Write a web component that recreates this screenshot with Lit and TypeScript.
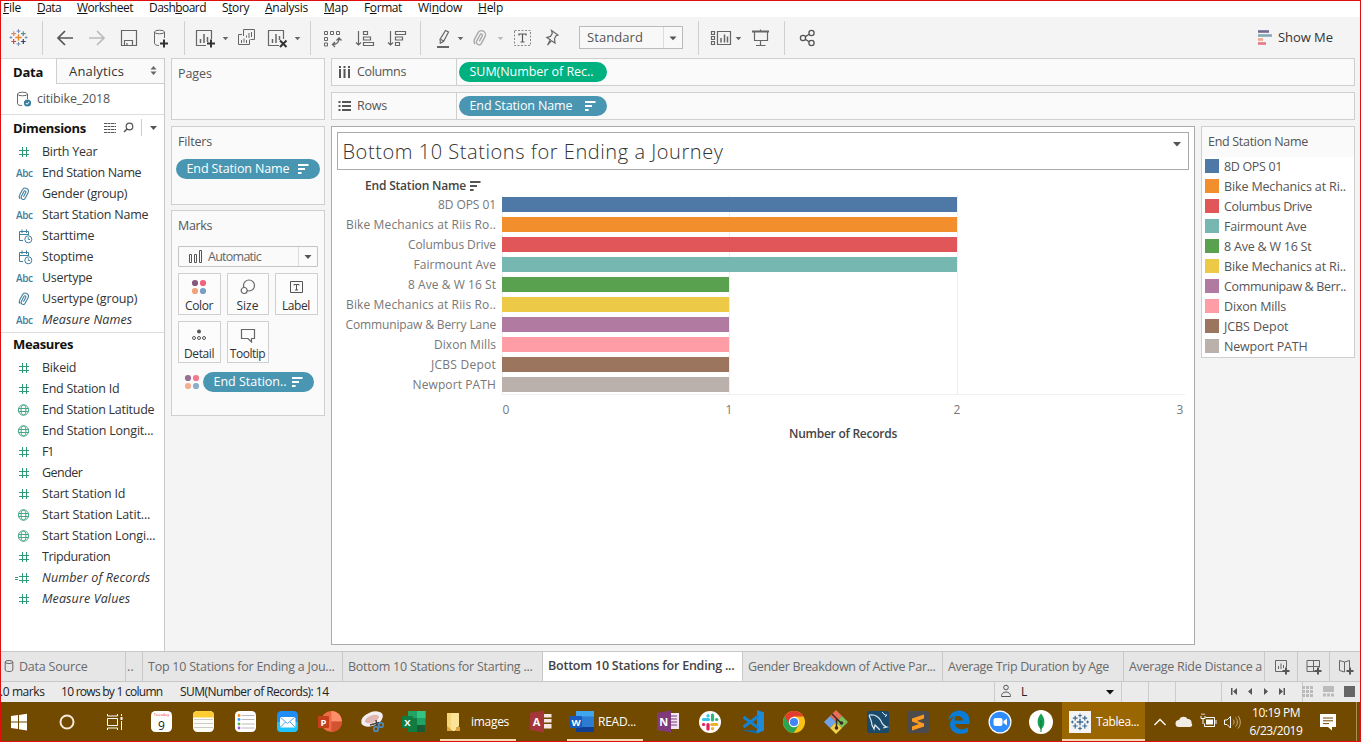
import { LitElement, html, svg, css, TemplateResult } from "lit";
import { customElement, property } from "lit/decorators.js";

/** Text tracked so that it fills a given width. */
@customElement("fit-text")
class FitText extends LitElement {
  @property() text = "";
  @property({ type: Number }) w = 0;
  static styles = css`
    :host { display: inline-block; white-space: pre; flex: none; }
  `;
  render() {
    return html`<span>${this.text}</span>`;
  }
  updated() {
    const s = this.renderRoot.querySelector("span") as HTMLElement;
    s.style.letterSpacing = "0px";
    const natural = s.getBoundingClientRect().width;
    if (this.w && this.text.length) s.style.letterSpacing = (this.w - natural) / this.text.length + "px";
  }
}

const t = (text: string, w: number, cls = "") => html`<fit-text class=${cls} .text=${text} .w=${w}></fit-text>`;

/** A slice of a strip: the viewBox keeps window coordinates. */
const seg = (x: number, y: number, w: number, h: number, body: unknown) =>
  html`<svg class="seg" width=${w} height=${h} viewBox="${x} ${y} ${w} ${h}" fill="none">${body}</svg>`;

const caret = (x: number, y: number, c = "#666") => svg`<path d="M${x - 2.8} ${y - 1.6}h5.6l-2.8 3.4z" fill=${c}/>`;
const vline = (x: number) => svg`<path d="M${x}.5 21V55" stroke="#d0d0d0"/>`;
const G = "#666";

const cross = (x: number, y: number, r: number, c: string, w = 1) =>
  svg`<path d="M${x - r} ${y}h${2 * r}M${x} ${y - r}v${2 * r}" stroke=${c} stroke-width=${w}/>`;
const tableauMark = (x: number, y: number, k: string[]) => svg`
  ${cross(x, y, 3.2, k[0], 1.4)}${cross(x, y - 6.4, 1.9, k[1])}${cross(x, y + 6.4, 1.9, k[1])}
  ${cross(x - 4.8, y - 3.8, 2.4, k[2], 1.2)}${cross(x + 4.8, y - 3.8, 2.4, k[3], 1.2)}
  ${cross(x - 4.8, y + 4, 2.4, k[4], 1.2)}${cross(x + 4.8, y + 4, 2.4, k[5], 1.2)}
  ${cross(x - 7.6, y, 1.4, k[6])}${cross(x + 7.6, y, 1.4, k[6])}`;

const clip = (x: number, y: number, c: string, k = 1) => svg`
  <g transform="translate(${x} ${y}) scale(${k}) rotate(28)" stroke=${c} stroke-width="1.1" fill="none">
    <path d="M-3.2 3V-2.5a3.2 3.2 0 0 1 6.4 0V3.6a2.1 2.1 0 0 1-4.2 0V-2a1 1 0 0 1 2 0V3M-3.2 2.5a4 4 0 0 0 2.2 4"/>
  </g>`;

const plus = (x: number, y: number, c = "#333", r = 4) =>
  svg`<path d="M${x - r} ${y}h${2 * r}M${x} ${y - r}v${2 * r}" stroke=${c} stroke-width="2"/>`;

const sortGlyph = (c: string) => html`<svg class="sortg" width="11" height="10" viewBox="0 0 11 10" fill=${c}>
  <path d="M0 0h10.5v2H0zM0 4h7v2H0zM0 8h3.6v2H0z"/></svg>`;

const fourDots = (k: number) => html`<svg width="16" height="16" viewBox="0 0 16 16">
  <g opacity=${k}><circle cx="4" cy="4" r="3.1" fill="#84587f"/><circle cx="12" cy="4" r="3.1" fill="#f0637c"/>
  <circle cx="4" cy="12" r="3.1" fill="#f2a27c"/><circle cx="12" cy="12" r="3.1" fill="#7a9fc4"/></g></svg>`;

const fieldIcon = (kind: string): TemplateResult => {
  const green = "#2f9a78";
  const blue = "#3f7f9f";
  if (kind === "abc") return html`<b class="abc">Abc</b>`;
  if (kind === "clip") return html`<svg width="20" height="18" viewBox="0 0 20 18">${clip(10, 8.6, blue, 1)}</svg>`;
  if (kind === "date")
    return html`<svg width="20" height="18" viewBox="0 0 20 18" fill="none" stroke=${blue}>
      <path d="M9 13.5H5.5v-9h9V8M5.5 7.5h9M8 2.500v3.500M12.500 2.500v3.500"/><circle cx="14.300" cy="12.300" r="3.500"/><path d="M14.300 10.300v2.200h1.800" stroke-width=".9"/></svg>`;
  if (kind === "globe")
    return html`<svg width="20" height="18" viewBox="0 0 20 18" fill="none" stroke="#45a585">
      <circle cx="9.500" cy="9" r="5.200"/><ellipse cx="9.500" cy="9" rx="2.400" ry="5"/><path d="M5 7.500h9M5 10.500h9"/></svg>`;
  return html`<svg width="20" height="18" viewBox="0 0 20 18" fill="none" stroke=${green}>
    <path d="M8.500 4v10M12.500 4v10M5 7.500h10M5 11.500h10"/>${kind === "calc" ? svg`<path d="M1 8.500h3M1 10.500h3"/>` : ""}</svg>`;
};

type Field = [string, string, number];
const dimensions: Field[] = [
  ["num", "Birth Year", 56], ["abc", "End Station Name", 100], ["clip", "Gender (group)", 86],
  ["abc", "Start Station Name", 107], ["date", "Starttime", 53], ["date", "Stoptime", 52],
  ["abc", "Usertype", 51], ["clip", "Usertype (group)", 96], ["abc", "Measure Names", 91],
];
const measures: Field[] = [
  ["num", "Bikeid", 35], ["num", "End Station Id", 78], ["globe", "End Station Latitude", 113],
  ["globe", "End Station Longit...", 112], ["num", "F1", 12], ["num", "Gender", 41],
  ["num", "Start Station Id", 84], ["globe", "Start Station Latit...", 109], ["globe", "Start Station Longi...", 114],
  ["num", "Tripduration", 69], ["calc", "Number of Records", 109], ["num", "Measure Values", 89],
];
const italics = new Set(["Measure Names", "Number of Records", "Measure Values"]);

const stations: { label: string; w: number; v: number; c: string; legend: string; lw: number }[] = [
  { label: "8D OPS 01", w: 58, v: 2, c: "#4e79a7", legend: "8D OPS 01", lw: 58 },
  { label: "Bike Mechanics at Riis Ro..", w: 150, v: 2, c: "#f28e2b", legend: "Bike Mechanics at Ri..", lw: 122 },
  { label: "Columbus Drive", w: 88, v: 2, c: "#e15759", legend: "Columbus Drive", lw: 88 },
  { label: "Fairmount Ave", w: 82.5, v: 2, c: "#76b7b2", legend: "Fairmount Ave", lw: 82.5 },
  { label: "8 Ave & W 16 St", w: 88, v: 1, c: "#59a14f", legend: "8 Ave & W 16 St", lw: 87.5 },
  { label: "Bike Mechanics at Riis Ro..", w: 150, v: 1, c: "#edc948", legend: "Bike Mechanics at Ri..", lw: 122 },
  { label: "Communipaw & Berry Lane", w: 150.5, v: 1, c: "#b07aa1", legend: "Communipaw & Berr..", lw: 122 },
  { label: "Dixon Mills", w: 62, v: 1, c: "#ff9da7", legend: "Dixon Mills", lw: 62 },
  { label: "JCBS Depot", w: 65, v: 1, c: "#9c755f", legend: "JCBS Depot", lw: 64.5 },
  { label: "Newport PATH", w: 83.5, v: 1, c: "#bab0ac", legend: "Newport PATH", lw: 83.5 },
];

const menus: [string, string, string, number, number][] = [
  ["", "F", "ile", 18, 16], ["", "D", "ata", 24, 16], ["", "W", "orksheet", 56, 16], ["Dash", "b", "oard", 57, 16],
  ["S", "t", "ory", 27, 16], ["", "A", "nalysis", 43, 16], ["", "M", "ap", 24, 16], ["F", "o", "rmat", 38, 16],
  ["Wi", "n", "dow", 44, 16], ["", "H", "elp", 25, 0],
];

@customElement("app-root")
class AppRoot extends LitElement {
  static styles = css`
    :host {
      display: flex; flex-direction: column; position: relative; width: 1361px; height: 742px;
      overflow: hidden; background: #f4f4f4; color: #333;
      font: 12.5px/18px "Open Sans", "Noto Sans", sans-serif;
    }
    * { box-sizing: border-box; }
    svg { display: block; flex: none; }
    .frame { position: absolute; inset: 0; border: 1px solid #e01010; pointer-events: none; z-index: 5; }
    .menubar { height: 17px; background: #fff; display: flex; padding-left: 3px; color: #111; font-size: 12px; line-height: 15px; }
    .menu { white-space: pre; display: flex; }
    .menu u { text-underline-offset: 1px; }
    .toolbar { height: 41px; display: flex; flex: none; }
    .select { display: flex; align-items: center; width: 104px; height: 23px; margin-top: 9px; border: 1px solid #bbb; background: #f8f8f8; padding-left: 7px; font-size: 13px; color: #555; }
    .select fit-text { padding-bottom: 1px; }
    .select .arrow { margin-left: auto; border-left: 1px solid #ddd; height: 21px; }
    .showme { margin-left: auto; display: flex; align-items: center; padding-right: 28px; font-size: 13px; height: 40px; gap: 6px; }
    .main { display: flex; height: 593px; flex: none; }
    .side { width: 165px; background: #fff; border-right: 1px solid #c9c9c9; flex: none; }
    .panetabs { display: flex; height: 26px; }
    .panetab { width: 56px; padding: 4px 0 0 13px; font-weight: 700; font-size: 13px; color: #111; border-top: 1px solid #ddd; }
    .panetab2 { flex: 1; display: flex; justify-content: space-between; background: #fafafa; border: 1px solid #cfcfcf; border-right: 0; padding: 3px 5px 0 12px; font-size: 13px; }
    .source { display: flex; height: 31px; border-bottom: 1px solid #ddd; align-items: center; padding-left: 16px; gap: 5px; color: #555; }
    .head { display: flex; height: 26px; align-items: center; padding-left: 13px; font-weight: 700; font-size: 13px; color: #111; }
    .head.m { height: 25px; margin-top: 2px; border-top: 1px solid #ddd; padding-bottom: 2px; }
    .field { height: 21px; display: flex; align-items: center; padding-left: 14px; }
    .field .gi { width: 28px; display: flex; }
    .abc { color: #3f7f9f; font-size: 10px; letter-spacing: -.4px; padding-left: 2px; font-weight: 600; }
    .it { font-style: italic; }
    .cards { width: 154px; margin-left: 6px; display: flex; flex-direction: column; flex: none; color: #555; }
    .card { border: 1px solid #cfcfcf; background: #fafafa; padding: 6px; flex: none; }
    .pages { height: 62px; margin-bottom: 6px; }
    .filters { height: 79px; margin-bottom: 5px; padding-left: 4px; }
    .filters .lbl { padding-left: 2px; display: block; }
    .marks { height: 206px; }
    .lbl { display: block; }
    .pill { height: 20px; border-radius: 10px; background: #4996b2; color: #fff; display: flex; align-items: center; justify-content: space-between; }
    .filters .pill { width: 144px; margin-top: 8px; padding: 0 11px 1px 10.500px; }
    .pill.g { background: #00b180; }
    .shelf .pill { width: 148px; margin-left: 2px; padding: 0 11px 1px 10.500px; }
    .mtype { display: flex; width: 140px; height: 21px; margin-top: 11px; border: 1px solid #c4c4c4; border-radius: 1px; align-items: center; padding-left: 10px; gap: 5px; color: #666; }
    .mtype .arrow { margin-left: auto; border-left: 1px solid #ddd; }
    .mgrid { display: grid; grid-template-columns: 43px 42px 43px; gap: 6px; margin-top: 6px; }
    .mbtn { height: 42px; border: 1px solid #cfcfcf; background: #fcfcfc; display: flex; flex-direction: column; align-items: center; justify-content: space-between; font-size: 12px; line-height: 15px; padding: 5px 1px 1px 0; color: #333; }
    .mpill { display: flex; margin-top: 9px; padding-left: 6px; gap: 3px; align-items: center; }
    .mpill .pill { width: 111px; padding: 0 11px 1px 10.500px; }
    .work { margin-left: 6px; display: flex; flex-direction: column; flex: none; width: 1024px; }
    .shelf { height: 28px; flex: none; margin-bottom: 6px; border: 1px solid #cfcfcf; background: #fafafa; display: flex; align-items: center; color: #555; }
    .shelf .name { width: 125px; height: 26px; border-right: 1px solid #cfcfcf; display: flex; align-items: center; padding-left: 6px; gap: 6px; }
    .lower { display: flex; align-items: flex-start; }
    .viz { width: 864px; height: 519px; background: #fff; border: 1px solid #aaa; flex: none; padding: 5px; }
    .title { width: 852px; height: 38px; border: 1px solid #aaa; padding: 5px 6px 0 4.500px; display: flex; justify-content: space-between; font-size: 20px; line-height: 28px; font-weight: 300; color: #333; }
    .chead { display: flex; padding: 6px 0 0 28px; gap: 4px; align-items: center; font-weight: 600; font-size: 12px; height: 25px; color: #444; }
    .plot { display: flex; }
    .names { width: 160px; color: #777; font-size: 12px; }
    .nm { height: 20px; line-height: 20px; display: flex; justify-content: flex-end; padding-right: 1px; }
    .bars { width: 683px; margin-left: 5px; height: 200px; padding-top: 2px; border-bottom: 1px solid #f0f0f0; border-left: 1px solid #eee;
      background: linear-gradient(#eee, #eee) 226px 0/1px 100% no-repeat, linear-gradient(#eee, #eee) 454px 0/1px 100% no-repeat; }
    .bar { height: 15px; margin: 0 0 5px -1px; }
    .axis { display: grid; grid-template-columns: 223px 228px 223px 8px; padding: 6px 0 0 165px; color: #777; font-size: 12px; }
    .axis span { width: 8px; text-align: center; }
    .axt { display: flex; justify-content: center; padding: 6px 0 0 158px; width: 854px; font-size: 12px; font-weight: 600; color: #444; }
    .legend { width: 154px; height: 232px; margin-left: 6px; border: 1px solid #cfcfcf; background: #fff; }
    .lh { background: #fafafa; height: 30px; padding: 6px 0 0 6px; color: #555; }
    .li { display: flex; height: 20px; align-items: center; gap: 5px; padding-left: 3px; color: #555; }
    .li i { width: 14px; height: 14px; flex: none; margin-bottom: 2px; }
    .tabs { height: 31px; flex: none; display: flex; background: #e6e6e6; border-top: 1px solid #c8c8c8; border-bottom: 1px solid #c8c8c8; color: #6a6a6a; }
    .tab { border-right: 1px solid #c8c8c8; padding: 6px 0 0 5px; width: 200px; flex: none; overflow: hidden; white-space: pre; }
    .tab.ds { width: 126px; display: flex; gap: 5px; padding-left: 4px; }
    .tab.dots { width: 17px; padding-left: 1px; }
    .tab.act { background: #fff; color: #444; font-weight: 600; padding-top: 5px; }
    .tab.trip { width: 181px; }
    .tab.ride { width: 141px; }
    .status { height: 20px; flex: none; display: flex; background: #ebebeb; color: #222; font-size: 12px; line-height: 20px; }
    .status .a { width: 61px; }
    .status .b { width: 119px; }
    .status .c { width: 814px; }
    .task { height: 40px; flex: none; display: flex; background: #714a00; color: #fff; font-size: 12px; }
    .run { display: flex; align-items: center; height: 39px; border-bottom: 2px solid #f2d9ae; width: 76px; }
    .run fit-text { padding-top: 2px; }
    .run.tb { background: #9a6602; width: 83px; }
    .clock { width: 66px; display: flex; flex-direction: column; align-items: center; padding-top: 2px; line-height: 18px; }
  `;

  field([k, n, w]: Field) {
    return html`<div class="field"><span class="gi">${fieldIcon(k)}</span>${t(n, w - 0.7, italics.has(n) ? "it" : "")}</div>`;
  }

  menu([a, u, b]: [string, string, string, number, number]) {
    return html`<div class="menu">${a}<u>${u}</u>${b}</div>`;
  }

  firstUpdated() {
    // Each menu title takes its own width plus the gap to the next one.
    this.renderRoot.querySelectorAll<HTMLElement>(".menu").forEach((m, i) => {
      const w = menus[i][3];
      const n = (m.textContent || "").length;
      const natural = m.getBoundingClientRect().width;
      m.style.letterSpacing = (w - natural) / n + "px";
      m.style.marginRight = menus[i][4] + "px";
    });
  }

  toolbar() {
    return html`<div class="toolbar">
      ${seg(0, 17, 110, 41, svg`
        ${tableauMark(18.5, 37.5, ["#e8862e", "#6b8fb0", "#d98a6a", "#5d8f8a", "#c0504d", "#34406e", "#7a92b8"])}
        ${vline(42)}
        <path d="M73 38H58M65 31l-7 7 7 7" stroke="#555" stroke-width="1.700"/>
        <path d="M89 38h15M97 31l7 7-7 7" stroke="#bbb" stroke-width="1.700"/>`)}
      ${seg(110, 17, 76, 41, svg`
        <path d="M121.500 30.500h15v15h-15zM124.500 45v-4.500h8V45M127 43v2" stroke=${G} stroke-width="1.200"/>
        <ellipse cx="159.500" cy="32" rx="5" ry="1.800" stroke=${G}/>
        <path d="M154.500 32v11.500c0 1 2 2 4.500 2M164.500 32v6" stroke=${G}/>${plus(164, 43.500)}${vline(184)}`)}
      ${seg(186, 17, 126, 41, svg`
        <path d="M206 45.500h-9.500v-15h15V39" stroke=${G} stroke-width="1.200"/><path d="M200.500 39v4M204 34v9M207.500 37v5" stroke=${G} stroke-width="1.500"/>
        ${plus(211, 43.500)}${caret(225.500, 38.500)}
        <path d="M243.500 36v-6.500h11v10h-4" stroke=${G}/><path d="M246.500 35.500v2M249 33v5M251.500 32v5" stroke=${G}/>
        <path d="M242 34.500h-3.500v10h11v-5" stroke=${G}/><path d="M241.500 40v3M244 38.500v4M246.500 40v3" stroke=${G}/>
        <path d="M279 45.500h-10.500v-15h15V39" stroke=${G} stroke-width="1.200"/><path d="M272.500 39v4M276 34v9M279.500 36v4" stroke=${G} stroke-width="1.500"/>
        <path d="M280 40.500l6.500 6.500M286.500 40.500l-6.500 6.500" stroke="#333" stroke-width="2"/>${caret(297.500, 38.500)}${vline(310)}`)}
      ${seg(312, 17, 110, 41, svg`
        <g stroke=${G}><path d="M324.500 31.500h3v3h-3zM330.500 31.500h3v3h-3zM336.500 31.500h3v3h-3zM324.500 37.500h3v3h-3zM324.500 43h3v3h-3z"/>
        <path d="M339 38.500c0 4-2.500 6-6.500 6M336.500 40.500l2.500-2.500 2.500 2.500M335 42l-2.500 2.500 2.500 2.500" stroke-width="1.300"/></g>
        <g stroke=${G} stroke-width="1.200"><path d="M358.500 31v14M356 42.500l2.500 2.500 2.500-2.500M363.500 31.500h4v3h-4zM363.500 37h7v3h-7zM363.500 42.500h10v3h-10z"/>
        <path d="M390.500 31v14M388 42.500l2.500 2.500 2.500-2.500M395.500 31.500h10v3h-10zM395.500 37h7v3h-7zM395.500 42.500h4v3h-4z"/></g>${vline(420)}`)}
      ${seg(422, 17, 157, 41, svg`
        <path d="M437 47h12" stroke=${G} stroke-width="2"/><path d="M445.500 30.500l3 1.500-5 9.500-3 1.500-.5-3.500zM441 39.500l3 1.700M439.500 43l1.500-1" stroke=${G} stroke-width="1.200"/>
        ${caret(460.500, 38.500)}${clip(480, 37.500, "#aaa", 1.250)}${caret(500.500, 38.500, "#bbb")}
        <path d="M514.500 30.500h16v15h-16z" stroke="#888" stroke-dasharray="2 1.500"/>
        <path d="M519 35.500v-1.500h7v1.500M522.500 34v8M520.500 42h4" stroke="#555" stroke-width="1.200"/>
        <path d="M551.500 30.500l6.500 4.500-2 .8-1.500 3 .5 4.200-3.500-2.300-4 4.500 2.800-5.500-3.500-2.300 3.700-1 1.800-3z" stroke=${G} stroke-width="1.200"/>`)}
      <div class="select">${t("Standard", 56)}<span class="arrow">${seg(664, 27, 18, 21, svg`<path d="M669.500 36.500h7l-3.500 3.800z" fill="#555"/>`)}</span></div>
      ${seg(683, 17, 150, 41, svg`${vline(698)}
        <g stroke=${G}><path d="M711.500 31.500h3v3h-3zM711.500 36.500h3v3h-3zM711.500 41.500h3v3h-3zM717.500 31.500h13v13h-13z" stroke-width="1.200"/>
        <path d="M721 38v4.500M724.500 34.500v8M727.500 36.500v6" stroke-width="1.500"/></g>${caret(738.500, 38.500)}
        <path d="M752 31.500h17" stroke=${G} stroke-width="2"/><path d="M754.500 32v8.500h13V32M760.500 29.500v1.500M760.500 41v4.500M756 45.500h9.500" stroke=${G} stroke-width="1.200"/>
        ${vline(784)}<g stroke="#555" stroke-width="1.300"><circle cx="803" cy="38" r="2.600"/><circle cx="811.500" cy="33" r="2.600"/><circle cx="811.500" cy="43" r="2.600"/>
        <path d="M805.300 36.600l4-2.300M805.300 39.400l4 2.300"/></g>`)}
      <div class="showme">${seg(1257, 29, 15, 17, svg`
        <path d="M1258 31.500h11" stroke="#75698f" stroke-width="2.600"/><path d="M1258 35.500h14" stroke="#86a8b8" stroke-width="2.600"/>
        <path d="M1258 39.500h5" stroke="#f0a590" stroke-width="2.600"/><path d="M1258 43.500h8" stroke="#e57886" stroke-width="2.600"/>`)}${t("Show Me", 55)}</div>
    </div>`;
  }

  side() {
    return html`<div class="side">
      <div class="panetabs"><div class="panetab">${t("Data", 30)}</div>
        <div class="panetab2">${t("Analytics", 55)}<svg width="11" height="16" viewBox="0 0 11 16"><path d="M2.500 7.500l3-3.500 3 3.500zM2.500 9.500h6l-3 3.500z" fill="#666"/></svg></div></div>
      <div class="source"><svg width="16" height="18" viewBox="0 0 16 18" fill="none"><ellipse cx="6.500" cy="4" rx="5" ry="1.800" stroke=${G}/>
        <path d="M1.500 4v9.500c0 1.500 2 2 4.500 2M11.500 4v5" stroke=${G}/><circle cx="11.500" cy="13" r="3.600" fill="#3a7f9d"/><path d="M9.800 13l1.300 1.300 2-2.400" stroke="#fff"/></svg>${t("citibike_2018", 73)}</div>
      <div class="head">${t("Dimensions", 73)}${seg(86, 115, 78, 26, svg`
        <path d="M104 124.500h12M104 127.500h12M104 130.500h12M104 133.500h12" transform="translate(0 -1)" stroke="#555" stroke-dasharray="3 .5"/>
        <circle cx="129.500" cy="126.500" r="3.300" stroke="#555" stroke-width="1.200"/><path d="M127 129l-3 3" stroke="#555" stroke-width="1.600"/>
        <path d="M141.500 119v17" stroke="#ccc"/><path d="M150 126h7l-3.500 4z" fill="#555"/>`)}</div>
      ${dimensions.map((f) => this.field(f))}
      <div class="head m">${t("Measures", 60)}</div>
      ${measures.map((f) => this.field(f))}
    </div>`;
  }

  cards() {
    const btn = (name: string, w: number, icon: unknown) => html`<div class="mbtn">${icon}${t(name, w)}</div>`;
    return html`<div class="cards">
      <div class="card pages">${t("Pages", 34)}</div>
      <div class="card filters"><span class="lbl">${t("Filters", 34)}</span>
        <div class="pill">${t("End Station Name", 103)}${sortGlyph("#fff")}</div></div>
      <div class="card marks"><span class="lbl">${t("Marks", 34)}</span>
        <div class="mtype"><svg width="14" height="13" viewBox="0 0 14 13" fill="none" stroke="#555"><path d="M.5 4.500h2v8h-2zM5.500 4.500h2v8h-2zM10.500 .5h2v12h-2z"/></svg>${t("Automatic", 53)}
          <span class="arrow">${seg(299, 247, 18, 19, svg`<path d="M304.500 255h7l-3.500 4z" fill="#555"/>`)}</span></div>
        <div class="mgrid">
          ${btn("Color", 28, fourDots(1))}
          ${btn("Size", 22, html`<svg width="16" height="16" viewBox="0 0 16 16" fill="none" stroke=${G}><circle cx="9" cy="6.500" r="5.500" stroke-width="1.200"/><circle cx="4.200" cy="11.500" r="3" fill="#fff" stroke-width="1.200"/></svg>`)}
          ${btn("Label", 28, html`<svg width="16" height="16" viewBox="0 0 16 16" fill="none" stroke="#555"><path d="M2.500 2.500h12v11h-12z"/><path d="M6 6.500V5.500h5v1M8.500 5.500v5.500M7 11h3"/></svg>`)}
          ${btn("Detail", 30, html`<svg width="16" height="16" viewBox="0 0 16 16" fill="none" stroke="#555"><circle cx="8" cy="4.500" r="2" fill="#555" stroke="none"/><circle cx="3" cy="11" r="1.500"/><circle cx="8" cy="11" r="1.500"/><circle cx="13" cy="11" r="1.500"/></svg>`)}
          ${btn("Tooltip", 35.5, html`<svg width="16" height="16" viewBox="0 0 16 16" fill="none" stroke=${G}><path d="M1.500 2.500h13v9h-3v3.500l-3.500-3.500H1.500z" stroke-width="1.200"/></svg>`)}
        </div>
        <div class="mpill">${fourDots(0.85)}<div class="pill">${t("End Station..", 73)}${sortGlyph("#fff")}</div></div>
      </div>
    </div>`;
  }

  work() {
    return html`<div class="work">
      <div class="shelf"><span class="name"><svg width="13" height="13" viewBox="0 0 13 13" fill="#555"><path d="M1 3h2v9H1zM5.500 3h2v9h-2zM10 3h2v9h-2zM1 0h2v2H1zM5.500 0h2v2h-2zM10 0h2v2h-2z"/></svg>${t("Columns", 49)}</span>
        <div class="pill g">${t("SUM(Number of Rec..", 124)}</div></div>
      <div class="shelf"><span class="name"><svg width="13" height="13" viewBox="0 0 13 13" fill="#555"><path d="M4 1h9v2H4zM4 5h9v2H4zM4 9h9v2H4zM.5 1h2v2h-2zM.5 5h2v2h-2zM.5 9h2v2h-2z"/></svg>${t("Rows", 30)}</span>
        <div class="pill">${t("End Station Name", 103)}${sortGlyph("#fff")}</div></div>
      <div class="lower">
        <div class="viz">
          <div class="title">${t("Bottom 10 Stations for Ending a Journey", 381)}
            <svg width="10" height="10" viewBox="0 0 10 10"><path d="M1 4h8L5 8.500z" fill="#555"/></svg></div>
          <div class="chead">${t("End Station Name", 101)}${sortGlyph("#555")}</div>
          <div class="plot">
            <div class="names">${stations.map((s) => html`<div class="nm">${t(s.label, s.w)}</div>`)}</div>
            <div class="bars">${stations.map((s) => html`<div class="bar" style="width:${Math.floor(s.v * 227.5)}px;background:${s.c}"></div>`)}</div>
          </div>
          <div class="axis">${[0, 1, 2, 3].map((n) => html`<span>${n}</span>`)}</div>
          <div class="axt">${t("Number of Records", 108)}</div>
        </div>
        <div class="legend"><div class="lh">${t("End Station Name", 100)}</div>
          ${stations.map((s) => html`<div class="li"><i style="background:${s.c}"></i>${t(s.legend, s.lw)}</div>`)}</div>
      </div>
    </div>`;
  }

  bottom() {
    return html`<div class="tabs">
        <div class="tab ds"><svg width="10" height="16" viewBox="0 0 10 16" fill="none" stroke=${G}><ellipse cx="5" cy="4" rx="3.800" ry="1.500"/><path d="M1.200 4v8c0 2 7.600 2 7.600 0V4"/></svg>${t("Data Source", 68.5)}</div>
        <div class="tab dots">${t("..", 7)}</div>
        <div class="tab">${t("Top 10 Stations for Ending a Jou...", 186.5)}</div>
        <div class="tab">${t("Bottom 10 Stations for Starting ...", 184.5)}</div>
        <div class="tab act">${t("Bottom 10 Stations for Ending ...", 186.5)}</div>
        <div class="tab">${t("Gender Breakdown of Active Par...", 187.5)}</div>
        <div class="tab trip">${t("Average Trip Duration by Age", 161)}</div>
        <div class="tab ride">${t("Average Ride Distance a", 133)}</div>
        ${seg(1264, 652, 97, 29, svg`<g stroke=${G}><path d="M1296.500 652v29M1328.500 652v29" stroke="#c8c8c8"/>
          <path d="M1282 671.500h-7.500v-11h11v7M1277.500 666v3M1280 663.500v5.500M1282.500 665v3"/>
          <path d="M1314 671.500h-8v-11h12.500v7M1306 666.500h12M1312.500 660.500v11"/>
          <path d="M1338.500 660.500l5 1.500 5-1.500v7M1338.500 660.500v10l5 1.500M1343.500 662v10"/></g>
          ${plus(1285, 671, "#555", 3.500)}${plus(1317, 671, "#555", 3.500)}${plus(1349, 671, "#555", 3.500)}`)}
      </div>
      <div class="status"><span class="a">${t(".0 marks", 44.5)}</span><span class="b">${t("10 rows by 1 column", 101.5)}</span><span class="c">${t("SUM(Number of Records): 14", 148.5)}</span>
        ${seg(994, 682, 27, 20, svg`<path d="M994.500 682v20" stroke="#ccc"/><circle cx="1006" cy="687.500" r="2.300" stroke="#555"/><path d="M1001.500 696.500c-.5-6 9.500-6 9 0z" stroke="#555"/>`)}
        ${t("L", 7)}
        ${seg(1028, 682, 333, 20, svg`<path d="M1106 690h8l-4 4.500z" fill="#111"/>
          <path d="M1121.500 682v20M1148.500 682v20M1175.500 682v20M1221.500 682v20M1302.500 682v20" stroke="#ccc"/>
          <g fill="#555"><path d="M1231 688h1.500v7h-1.500zM1237 688v7l-4-3.500zM1252 688v7l-4-3.500zM1264 688v7l4-3.500zM1279 688v7l4-3.500zM1283.500 688h1.500v7h-1.500z"/></g>
          <g fill="#bbb">${[0, 1, 2].map((r) => [0, 1, 2].map((c) => svg`<rect x=${1302 + c * 4} y=${686 + r * 4} width="3" height="3"/>`))}
          <path d="M1323 686h11v6h-11zM1323 693.500h3v3h-3zM1327 693.500h3v3h-3zM1331 693.500h3v3h-3z"/></g>
          <path d="M1344 686h11v11h-11z" fill="#666"/>`)}
      </div>`;
  }

  taskbar() {
    const card = (x: number, fill: string, body: unknown) => svg`<rect x=${x} y="711" width="21" height="21" rx="4.500" fill=${fill}/>${body}`;
    const letter = (x: number, l: string, c: string, w = 11) => svg`<rect x=${x} y="716" width=${w} height="12" rx="1" fill=${c}/>
      <text x=${x + w / 2} y="725.700" text-anchor="middle" font-size="9.500" font-weight="700" font-family="Open Sans" fill="#fff">${l}</text>`;
    return html`<div class="task">
      ${seg(0, 702, 146, 40, svg`<path d="M11 716l7-1v6.500h-7zM19 714.900l8-1.200v7.800h-8zM11 722.500h7v6.500l-7-1zM19 722.500h8v8l-8-1.200z" fill="#fff"/>
        <circle cx="67" cy="722" r="6.500" stroke="#f4ead8" stroke-width="2"/>
        <path d="M107.500 718.500h10v7h-10zM107.500 714v2h10v-2M107.500 730v-2h10v2M121.500 714v2M121.500 721v9" stroke="#fff"/><path d="M120.500 717h2v3h-2z" fill="#fff"/>`)}
      ${seg(146, 702, 162, 40, svg`
        ${card(151, "#fff", svg`<text x="161.500" y="715.800" text-anchor="middle" font-size="4" font-family="Open Sans" fill="#e33">Tuesday</text>
          <text x="161.500" y="729.800" text-anchor="middle" font-size="12" font-family="Open Sans" fill="#222">9</text>`)}
        ${card(193, "#fdfdf8", svg`<path d="M193 717.500v-2a4.500 4.500 0 0 1 4.500-4.500h12a4.500 4.500 0 0 1 4.500 4.500v2z" fill="#fc3"/><path d="M194 719.500h19M194 723.500h19M194 727.500h19" stroke="#ccc"/>`)}
        ${card(235, "#fff", svg`<path d="M241.500 715.500h13M241.500 719.500h13M241.500 724h13M241.500 728h13" stroke="#bbb"/><circle cx="239" cy="715.500" r="1.400" fill="#f80"/><circle cx="239" cy="719.500" r="1.400" fill="#39f"/><circle cx="239" cy="724" r="1.400" fill="#4b4"/><circle cx="239" cy="728" r="1.400" fill="#a5d"/>`)}
        ${card(277, "#1f8df5", svg`<path d="M277 722h21v6a4 4 0 0 1-4 4h-13a4 4 0 0 1-4-4z" fill="#22c3fa"/><rect x="280" y="717" width="15.500" height="10.500" rx="1.500" fill="#fff"/><path d="M280.500 717.500l7 6 7-6M280.500 727l5-5M295 727l-5-5" stroke="#4aa8ee"/>`)}`)}
      ${seg(308, 702, 132, 40, svg`
        <circle cx="331.500" cy="721.500" r="10.500" fill="#ed6c47"/><path d="M331.500 711a10.500 10.500 0 0 1 10.500 10.500h-10.500z" fill="#ff8f6b"/><path d="M331.500 732a10.500 10.500 0 0 0 10.500-10.500h-10.500z" fill="#d35230"/>${letter(318, "P", "#c43e1c")}
        <ellipse cx="372" cy="719" rx="11.500" ry="6.800" fill="#f3eef0" transform="rotate(-22 372 719)"/><ellipse cx="372" cy="719" rx="7.500" ry="3.600" fill="#e2b6b0" transform="rotate(-22 372 719)"/>
        <path d="M370 725l9-2.500M376 720l1 6" stroke="#444" stroke-width="1.500"/><circle cx="381" cy="725" r="2.300" stroke="#4d8fc4" stroke-width="1.600"/><circle cx="376" cy="729" r="2.300" stroke="#4d8fc4" stroke-width="1.600"/>
        <path d="M408 711h17.500v21h-17.500z" fill="#21a366"/><path d="M417 711h8.500v7h-8.500z" fill="#33c481"/><path d="M408 718h9v14h-9z" fill="#107c41"/><path d="M417 725h8.500v7h-8.500z" fill="#185c37"/>${letter(402, "X", "#107c41")}`)}
      <div class="run">${seg(440, 702, 31, 37, svg`<path d="M447 713h6v18h-6z" fill="#f5d67a"/><path d="M451 713h8v13l-4 5h-4z" fill="#fbe49a"/><path d="M447 726l6 5h-6zM456 727h4v4h-4z" fill="#dba73c"/>`)}${t("images", 38)}</div>
      ${seg(516, 702, 51, 40, svg`<path d="M541 714h10.500v3.500h-10.500zM541 719h10.500v3.500h-10.500zM541 724h10.500v4.500h-10.500z" fill="#f7e6e4"/><path d="M530 713l14-2.500v22l-14-2.500z" fill="#a4373a"/>
        <text x="536.500" y="726" text-anchor="middle" font-size="11" font-weight="700" font-family="Open Sans" fill="#fff">A</text>`)}
      <div class="run">${seg(567, 702, 31, 37, svg`<path d="M576 711h18v21h-18z" fill="#2b7cd3"/><path d="M576 711h18v5.500h-18z" fill="#41a5ee"/><path d="M576 727h18v5h-18z" fill="#103f91"/>${letter(570, "W", "#185abd", 12)}`)}${t("READ...", 38)}</div>
      ${seg(643, 702, 419, 40, svg`
        <path d="M669 713h10v16h-10z" fill="#f1e4f2"/><path d="M671 716h6M671 719h6M671 722h6M671 725h6" stroke="#80397b"/><path d="M657 713l14-2.500v22l-14-2.500z" fill="#80397b"/><text x="663.800" y="726" text-anchor="middle" font-size="11" font-weight="700" font-family="Open Sans" fill="#fff">N</text>
        <circle cx="710" cy="722" r="11" fill="#fff"/><g stroke-width="3.200" stroke-linecap="round"><path d="M703.500 719.500h5" stroke="#36c5f0"/><path d="M708 715.500v.5" stroke="#36c5f0"/><path d="M712.500 715v5" stroke="#2eb67d"/><path d="M716.500 719.500h.2" stroke="#2eb67d"/><path d="M711.800 724.500h5" stroke="#ecb22e"/><path d="M712.500 728.500v.2" stroke="#ecb22e"/><path d="M708 724.500v4.500" stroke="#e01e5a"/><path d="M703.500 724.500h.2" stroke="#e01e5a"/></g>
        <path d="M757 710l7 2.500v18l-7 3z" fill="#1f8ad8"/><path d="M758.500 716l-15 11M758.500 728l-15-11" stroke="#1583d0" stroke-width="3"/><path d="M741 730l16 3.500v-3z" fill="#0d6fb5"/>
        <circle cx="794" cy="722" r="11" fill="#fbc116"/><path d="M784.500 716.500a11 11 0 0 1 19 0H794l-4.800 8.200z" fill="#e33b2e"/><path d="M784.500 716.500a11 11 0 0 0 9.200 16.500l5.200-8.500h-9z" fill="#2da44f"/><circle cx="794" cy="722" r="5.200" fill="#fff"/><circle cx="794" cy="722" r="4.100" fill="#4285f4"/>
        <path d="M836 710l6 6-6 6-6-6z" fill="#ea6f5a"/><path d="M830 716l6 6-6 6-6-6z" fill="#6fa3e6"/><path d="M842 716l6 6-6 6-6-6z" fill="#7cc15c"/><path d="M836 722l6 6-6 6-6-6z" fill="#f1d04a"/><path d="M832 714l4.500 4.500v10M836.500 718.500l5 5" stroke="#3a2a20" stroke-width="1.500"/><circle cx="836.500" cy="728" r="1.800" fill="#3a2a20"/><circle cx="841.500" cy="723" r="1.800" fill="#3a2a20"/>
        <rect x="867" y="711" width="22" height="22" rx="2" fill="#1b4a6b"/><path d="M869 715c6-1 10 2 12 6 1 3 3 5 6 6l-4 1M869 715c1 4 3 6 3 10l2 4 1-4 5 5" stroke="#d9e8f2" stroke-width="1.200"/><path d="M882 712l3 3h2l-2 2" stroke="#d9e8f2"/>
        <rect x="907" y="711" width="22" height="22" rx="2" fill="#4b4b4b"/><path d="M912 718.500l12-4v4l-7 2.500 7 2.500v3l-12 4v-4l7-2.500-7-2.500z" fill="#ff9a1f"/>
        <path d="M948.500 720c1-6 5.500-9.500 10.500-9.500 6.500 0 10.500 4.500 10.500 10v3.500h-14c0 6 8 6.500 12.500 3.500v4.500c-8 4-18 1.500-18-7.500 0-4 2.500-7 6-8.500-1 1.500-1.500 3-1.500 4.500h8.500c0-5.500-9-6.500-14.500-.5z" fill="#0a7cd6"/>
        <circle cx="1000" cy="722" r="11.500" fill="#fff"/><circle cx="1000" cy="722" r="10.300" fill="#2d8cff"/><rect x="993.500" y="718" width="9" height="8" rx="2" fill="#fff"/><path d="M1003.500 721l3.500-2.500v7l-3.500-2.500z" fill="#fff"/>
        <circle cx="1041" cy="722" r="12" fill="#fff"/><path d="M1041 713.500c4.500 5 4.500 12 0 16-4.500-4-4.500-11 0-16z" fill="#13a052"/><path d="M1041 720v12" stroke="#0c7a3d"/>`)}
      <div class="run tb">${seg(1062, 702, 34, 37, svg`<rect x="1069" y="711" width="22" height="22" fill="#f4f4f4"/>${tableauMark(1080, 722, Array(7).fill("#3d6a92"))}`)}${t("Tablea...", 43)}</div>
      ${seg(1145, 702, 98, 40, svg`<path d="M1154.500 725l5.500-5.500 5.500 5.500" stroke="#fff" stroke-width="1.300"/>
        <path d="M1179 727a3.500 3.500 0 0 1 0-7c1-4 7-4.500 8.500-1 3 0 4.500 2 4 4.300 1.500 1.500.5 3.700-1.500 3.700z" fill="#f2ede4"/>
        <path d="M1205.500 717.500h9v9h-10v-3M1216 720v4" stroke="#fff"/><path d="M1206 719.500h7v5h-7z" fill="#fff"/><path d="M1201 716v2.500h4V716M1202 715v-1.500M1204 715v-1.500M1203 719v5" stroke="#fff"/>
        <path d="M1224.500 720h2.500l3.500-3.500v11.500l-3.500-3.500h-2.500z" stroke="#fff"/><path d="M1233 719.500c1.500 1.500 1.500 3.500 0 5M1235.500 717.500c2.500 2.500 2.500 6.500 0 9M1238 716c3 3.500 3 9 0 12.500" stroke="#c9b28a"/>`)}
      <div class="clock">${t("10:19 PM", 48)}${t("6/23/2019", 53)}</div>
      ${seg(1309, 702, 52, 40, svg`<path d="M1320 714h16v13h-4v3.500l-4-3.500h-8z" fill="#fff"/><path d="M1323 718h10M1323 720.800h10M1323 723.600h6" stroke="#714a00"/><path d="M1356.500 702v39" stroke="#a88c5c"/>`)}
    </div>`;
  }

  render() {
    return html`<div class="menubar">${menus.map((m) => this.menu(m))}</div>
      ${this.toolbar()}
      <div class="main">${this.side()}${this.cards()}${this.work()}</div>
      ${this.bottom()}${this.taskbar()}
      <div class="frame"></div>`;
  }
}
